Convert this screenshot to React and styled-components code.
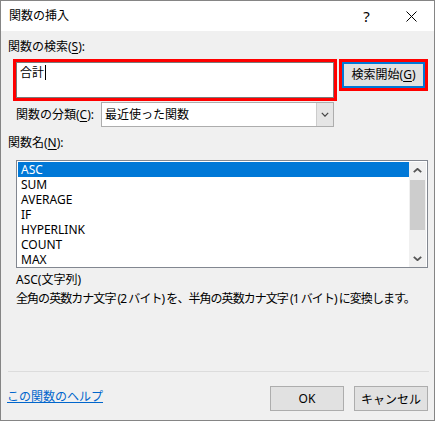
import React from 'react';
import styled, { createGlobalStyle } from 'styled-components';

const GlobalStyle = createGlobalStyle`
  html, body {
    margin: 0;
    padding: 0;
    background: #ffffff;
  }
  body {
    font-family: "Noto Sans", "Noto Sans CJK JP", sans-serif;
    font-size: 12px;
    color: #000;
  }
  * { box-sizing: border-box; }
`;

const Window = styled.div`
  width: 435px;
  height: 421px;
  border: 1px solid #858585;
  background: #f0f0f0;
  display: flex;
  flex-direction: column;
`;

const TitleBar = styled.div`
  height: 30px;
  flex-shrink: 0;
  background: #ffffff;
  display: flex;
  align-items: center;
  padding-left: 8px;
`;

const Title = styled.span`
  flex: 1;
  font-size: 12px;
  line-height: 16px;
`;

const TitleButton = styled.div`
  width: 45px;
  height: 30px;
  display: flex;
  align-items: center;
  justify-content: center;
  font-size: 15px;
`;

const Body = styled.div`
  flex: 1;
  display: flex;
  flex-direction: column;
  padding: 8px 5px 0 7px;
`;

const Label = styled.div`
  line-height: 16px;
  white-space: nowrap;
  margin-left: ${p => p.$indent || 0}px;
  margin-top: ${p => p.$top || 0}px;
  width: ${p => (p.$width ? `${p.$width}px` : 'auto')};
  flex-shrink: 0;
`;

const Key = styled.u`
  text-underline-offset: 2px;
`;

const SearchRow = styled.div`
  display: flex;
  align-items: flex-start;
  gap: 2px;
  margin-top: 4px;
  margin-left: 5px;
`;

const Highlight = styled.div`
  border: 3px solid #ff0000;
  width: ${p => p.$w}px;
  height: ${p => p.$h}px;
  display: flex;
`;

const SearchInput = styled.div`
  flex: 1;
  background: #ffffff;
  border: 1px solid #7a7a7a;
  padding: 2px 0 0 3px;
  line-height: 16px;
  display: flex;
  align-items: flex-start;
`;

const Caret = styled.span`
  display: inline-block;
  width: 1px;
  height: 15px;
  background: #000;
  margin-left: 1px;
`;

const SearchButton = styled.div`
  flex: 1;
  border: 2px solid #0078d7;
  background: #e1e1e1;
  display: flex;
  align-items: center;
  justify-content: center;
  line-height: 16px;
`;

const CategoryRow = styled.div`
  display: flex;
  align-items: center;
  margin-top: 1px;
`;

const Select = styled.div`
  width: 233px;
  height: 25px;
  background: #ffffff;
  border: 1px solid #adadad;
  display: flex;
  align-items: stretch;
`;

const SelectValue = styled.div`
  flex: 1;
  padding-left: 3px;
  line-height: 23px;
`;

const SelectArrow = styled.div`
  width: 17px;
  background: #e5e5e5;
  border-left: 1px solid #cccccc;
  display: flex;
  align-items: center;
  justify-content: center;
`;

const ListBox = styled.div`
  margin: 9px 0 0 8px;
  width: 412px;
  height: 108px;
  border: 1px solid #828790;
  background: #ffffff;
  padding: 1px;
  display: grid;
  grid-template-columns: 1fr 17px;
`;

const Items = styled.div`
  display: flex;
  flex-direction: column;
`;

const Item = styled.div`
  height: 15px;
  line-height: 15px;
  padding-left: 3px;
  background: ${p => (p.$selected ? '#0078d7' : 'transparent')};
  color: ${p => (p.$selected ? '#ffffff' : '#000000')};
`;

const ScrollBar = styled.div`
  background: #f0f0f0;
  display: grid;
  grid-template-rows: 17px 51px 1fr 17px;
  justify-items: center;
`;

const ScrollArrow = styled.div`
  display: flex;
  align-items: center;
  justify-content: center;
  width: 100%;
`;

const Thumb = styled.div`
  width: 15px;
  background: #cdcdcd;
  margin-top: 1px;
`;

const Description = styled.div`
  margin: 2px 0 0 8px;
  line-height: 19px;
  white-space: nowrap;
`;

const DescLine = styled.div`
  letter-spacing: ${p => p.$tight ? '-0.95px' : '0'};
`;

const Spacer = styled.div`
  flex: 1;
`;

const Separator = styled.div`
  height: 1px;
  background: #dcdcdc;
`;

const Footer = styled.div`
  display: flex;
  align-items: center;
  margin-top: 14px;
  padding-bottom: 9px;
  padding-right: 1px;
`;

const HelpLink = styled.a`
  color: #0066cc;
  text-decoration: underline;
  margin-left: -1px;
  margin-top: -4px;
  line-height: 16px;
  cursor: pointer;
`;

const Buttons = styled.div`
  margin-left: auto;
  display: flex;
  gap: 10px;
`;

const Button = styled.div`
  width: 74px;
  height: 25px;
  background: #e1e1e1;
  border: 1px solid #adadad;
  display: flex;
  align-items: center;
  justify-content: center;
`;

const Chevron = ({ up, width = 9, height = 5, weight = 1.8, color = '#555555' }) => (
  <svg width={width} height={height} viewBox={`0 0 ${width} ${height}`}>
    <polyline
      points={
        up
          ? `0.8,${height - 0.8} ${width / 2},0.8 ${width - 0.8},${height - 0.8}`
          : `0.8,0.8 ${width / 2},${height - 0.8} ${width - 0.8},0.8`
      }
      fill="none"
      stroke={color}
      strokeWidth={weight}
    />
  </svg>
);

const CloseIcon = () => (
  <svg width="11" height="11" viewBox="0 0 11 11">
    <path d="M0.5 0.5 L10.5 10.5 M10.5 0.5 L0.5 10.5" stroke="#000" strokeWidth="1" />
  </svg>
);

const functions = ['ASC', 'SUM', 'AVERAGE', 'IF', 'HYPERLINK', 'COUNT', 'MAX'];

export default function App() {
  return (
    <>
      <GlobalStyle />
      <Window>
        <TitleBar>
          <Title>関数の挿入</Title>
          <TitleButton>?</TitleButton>
          <TitleButton>
            <CloseIcon />
          </TitleButton>
        </TitleBar>
        <Body>
          <Label>
            関数の検索(<Key>S</Key>):
          </Label>
          <SearchRow>
            <Highlight $w={324} $h={42}>
              <SearchInput>
                合計<Caret />
              </SearchInput>
            </Highlight>
            <Highlight $w={89} $h={32}>
              <SearchButton>
                検索開始(<Key>G</Key>)
              </SearchButton>
            </Highlight>
          </SearchRow>
          <CategoryRow>
            <Label $indent={8} $width={85}>
              関数の分類(<Key>C</Key>):
            </Label>
            <Select>
              <SelectValue>最近使った関数</SelectValue>
              <SelectArrow>
                <Chevron width={8} height={5} weight={1.2} color="#444444" />
              </SelectArrow>
            </Select>
          </CategoryRow>
          <Label $top={8}>
            関数名(<Key>N</Key>):
          </Label>
          <ListBox>
            <Items>
              {functions.map((name, i) => (
                <Item key={name} $selected={i === 0}>
                  {name}
                </Item>
              ))}
            </Items>
            <ScrollBar>
              <ScrollArrow>
                <Chevron up />
              </ScrollArrow>
              <Thumb />
              <div />
              <ScrollArrow>
                <Chevron />
              </ScrollArrow>
            </ScrollBar>
          </ListBox>
          <Description>
            <DescLine>ASC(文字列)</DescLine>
            <DescLine $tight>
              全角の英数カナ文字 (2 バイト) を、半角の英数カナ文字 (1 バイト) に変換します。
            </DescLine>
          </Description>
          <Spacer />
          <Separator />
          <Footer>
            <HelpLink>この関数のヘルプ</HelpLink>
            <Buttons>
              <Button>OK</Button>
              <Button>キャンセル</Button>
            </Buttons>
          </Footer>
        </Body>
      </Window>
    </>
  );
}
